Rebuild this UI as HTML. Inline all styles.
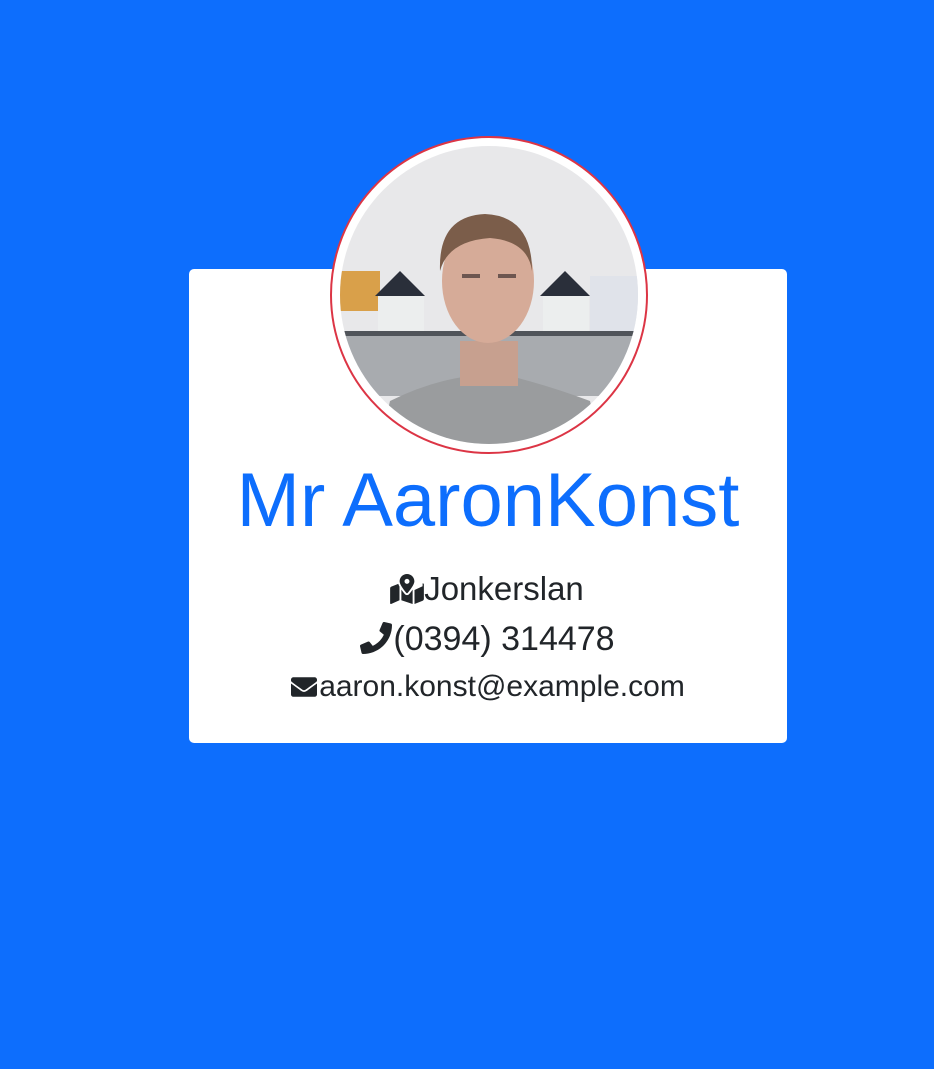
<!DOCTYPE html>
<html><head><meta charset="utf-8"><style>
html,body{margin:0;padding:0;}
body{width:934px;height:1069px;background:#0d6efd;position:relative;overflow:hidden;font-family:"Liberation Sans",Arial,sans-serif;}
.card{position:absolute;left:189px;top:269px;width:598px;height:474px;background:#fff;border-radius:5px;}
.av{position:absolute;left:330px;top:136px;width:314px;height:314px;border:2px solid #dc3545;border-radius:50%;background:#fff;}
.av svg{position:absolute;left:8px;top:8px;}
.name{position:absolute;left:21px;width:934px;top:456px;text-align:center;color:#0d6efd;font-size:76px;line-height:90px;}
.l{position:absolute;left:20px;width:934px;text-align:center;color:#212529;white-space:nowrap;}
.l svg{vertical-align:-4px;}
</style></head><body>
<div class="card"></div>
<div class="av"><svg width="298" height="298" viewBox="0 0 298 298">
<defs><clipPath id="c"><circle cx="149" cy="149" r="149"/></clipPath></defs>
<g clip-path="url(#c)">
<rect width="298" height="298" fill="#e8e8ea"/>
<rect x="0" y="125" width="40" height="40" fill="#d9a04a"/>
<path d="M35 150 L60 125 L85 150 Z" fill="#2a2f3a"/><rect x="38" y="150" width="46" height="40" fill="#eceeee"/>
<path d="M200 150 L225 125 L250 150 Z" fill="#2a2f3a"/><rect x="203" y="150" width="46" height="40" fill="#eceeee"/>
<rect x="250" y="130" width="48" height="60" fill="#e0e3ea"/>
<rect x="0" y="190" width="298" height="60" fill="#a8abaf"/>
<rect x="0" y="185" width="298" height="5" fill="#50545a"/>
<path d="M40 298 L50 255 Q90 235 130 230 L170 230 Q210 240 250 255 L260 298 Z" fill="#9a9c9e"/>
<rect x="120" y="195" width="58" height="45" fill="#c7a08f"/>
<ellipse cx="148" cy="135" rx="46" ry="62" fill="#d6ab98"/>
<path d="M100 125 Q98 70 145 68 Q192 70 192 125 Q188 95 150 92 Q108 95 100 125 Z" fill="#7b5d4a"/>
<rect x="122" y="128" width="18" height="4" fill="#6d5650"/><rect x="158" y="128" width="18" height="4" fill="#6d5650"/>
</g></svg></div>
<div class="name">Mr AaronKonst</div>
<div class="l" style="top:569px;font-size:33px;line-height:40px;"><svg width="34" height="30" viewBox="0 0 576 512"><path fill="#212529" d="M288 0c-69.6 0-126 56.4-126 126 0 56.3 82.4 158.8 113.9 196 6.4 7.5 17.8 7.5 24.2 0C331.6 284.8 414 182.3 414 126 414 56.4 357.6 0 288 0zm0 168c-23.2 0-42-18.8-42-42s18.8-42 42-42 42 18.8 42 42-18.8 42-42 42zM20.1 216A32 32 0 0 0 0 245.7v250.3c0 11.3 11.4 19.1 21.9 14.9L160 448V214.9c-8.8-16-16-31.5-21.1-46.4L20.1 216zM288 359.7c-14.1 0-27.4-6.2-36.5-17-19.7-23.2-40.6-49.6-59.5-76.7V448l192 64V266c-18.9 27.1-39.8 53.5-59.5 76.7-9.1 10.8-22.4 17-36.5 17zm266-151.6L416 272v240l139.9-55.9A32 32 0 0 0 576 426.3V176c0-11.3-11.4-19.1-21.9-14.9z"/></svg>Jonkerslan</div>
<div class="l" style="top:619px;font-size:34px;line-height:40px;"><svg width="34" height="32" viewBox="0 0 512 512"><path fill="#212529" d="M497.4 361.8l-112-48a24 24 0 0 0-28 6.9l-49.6 60.6A370.7 370.7 0 0 1 130.6 204.1l60.6-49.6a23.9 23.9 0 0 0 6.9-28l-48-112A24.2 24.2 0 0 0 122.6.6l-104 24A24 24 0 0 0 0 48c0 256.5 207.9 464 464 464a24 24 0 0 0 23.4-18.6l24-104a24.3 24.3 0 0 0-14-27.6z" transform="translate(512 0) scale(-1 1)"/></svg>(0394) 314478</div>
<div class="l" style="top:668px;font-size:30px;line-height:38px;"><svg width="30" height="26" viewBox="0 0 512 512"><path fill="#212529" d="M502.3 190.8c3.9-3.1 9.7-.2 9.700 4.7V400c0 26.5-21.5 48-48 48H48c-26.5 0-48-21.5-48-48V195.6c0-5 5.7-7.8 9.7-4.7 22.4 17.4 52.1 39.5 154.1 113.6 21.1 15.4 56.7 47.8 92.2 47.6 35.7.3 72-32.8 92.3-47.6 102-74.1 131.6-96.3 154-113.7zM256 320c23.2.4 56.6-29.2 73.4-41.4 132.7-96.3 142.8-104.7 173.4-128.7 5.8-4.5 9.2-11.5 9.2-18.9v-19c0-26.5-21.5-48-48-48H48C21.5 64 0 85.5 0 112v19c0 7.4 3.4 14.3 9.2 18.9 30.6 23.9 40.7 32.4 173.4 128.7 16.8 12.2 50.2 41.8 73.4 41.4z"/></svg>aaron.konst@example.com</div>
</body></html>
